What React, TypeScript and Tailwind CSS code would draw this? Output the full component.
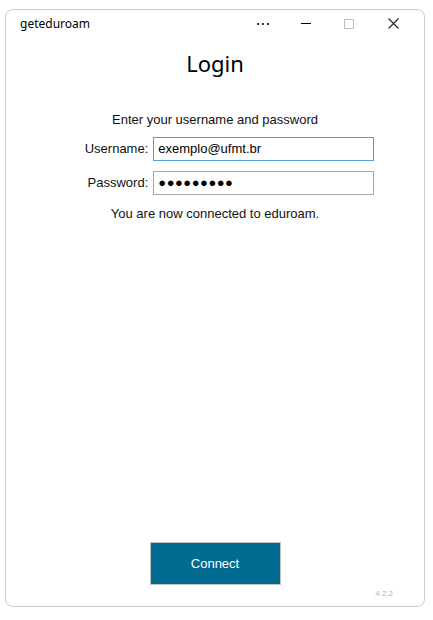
import React from "react";

export default function App() {
  return (
    <div className="w-[433px] h-[620px] bg-white pl-[5px] pt-[9px]" style={{ fontFamily: "'Liberation Sans', Arial, sans-serif" }}>
      <div className="w-[420px] h-[598px] rounded-[8px] border border-[#cdcdcd] bg-white flex flex-col relative">
        {/* title bar */}
        <div className="h-[27px] flex items-center pl-[14px] text-[12px] text-black" style={{ fontFamily: "'Noto Sans', 'Open Sans', sans-serif" }}>
          <span className="mt-[1px]">geteduroam</span>
          <div className="ml-auto flex items-center h-full mr-[8px]">
            <div className="w-[43px] flex justify-center gap-[3px]">
              <span className="w-[2px] h-[2px] bg-[#333]" />
              <span className="w-[2px] h-[2px] bg-[#333]" />
              <span className="w-[2px] h-[2px] bg-[#333]" />
            </div>
            <div className="w-[43px] flex justify-center">
              <span className="w-[10px] h-[1px] bg-black" />
            </div>
            <div className="w-[43px] flex justify-center">
              <span className="w-[10px] h-[10px] border border-[#bdbdbd]" />
            </div>
            <div className="w-[46px] flex justify-center">
              <svg width="11" height="11" viewBox="0 0 11 11">
                <path d="M0.5 0.5 L10.5 10.5 M10.5 0.5 L0.5 10.5" stroke="#222" strokeWidth="1.1" />
              </svg>
            </div>
          </div>
        </div>
        {/* content */}
        <div className="flex flex-col items-center flex-1">
          <div className="mt-[12px] text-[22px] leading-[28px] text-black" style={{ fontFamily: "'Noto Sans', 'Open Sans', sans-serif" }}>Login</div>
          <div className="mt-[35px] text-[13px] leading-[16px] text-[#111]">Enter your username and password</div>
          <div className="mt-[9px] grid grid-cols-[auto_221px] gap-x-[5px] gap-y-[10px] items-center ml-[29px]">
            <div className="text-[13px] text-right text-[#111]">Username:</div>
            <div className="h-[24px] border border-[#5a9be0] flex items-center px-[4px] text-[13px] text-black">exemplo@ufmt.br</div>
            <div className="text-[13px] text-right text-[#111]">Password:</div>
            <div className="h-[24px] border border-[#a6a6a6] flex items-center px-[4px] text-[13px] text-black tracking-[0.5px]">●●●●●●●●●</div>
          </div>
          <div className="mt-[11px] text-[13px] leading-[16px] text-[#111]">You are now connected to eduroam.</div>
          <div className="mt-auto mb-[21px] w-[131px] h-[43px] bg-[#006a8f] border border-[#c4c4c4] flex items-center justify-center text-white text-[13px]">Connect</div>
        </div>
        <div className="absolute right-[31px] bottom-[6px] text-[8px] text-[#aab6c4]">4.2.2</div>
      </div>
    </div>
  );
}
